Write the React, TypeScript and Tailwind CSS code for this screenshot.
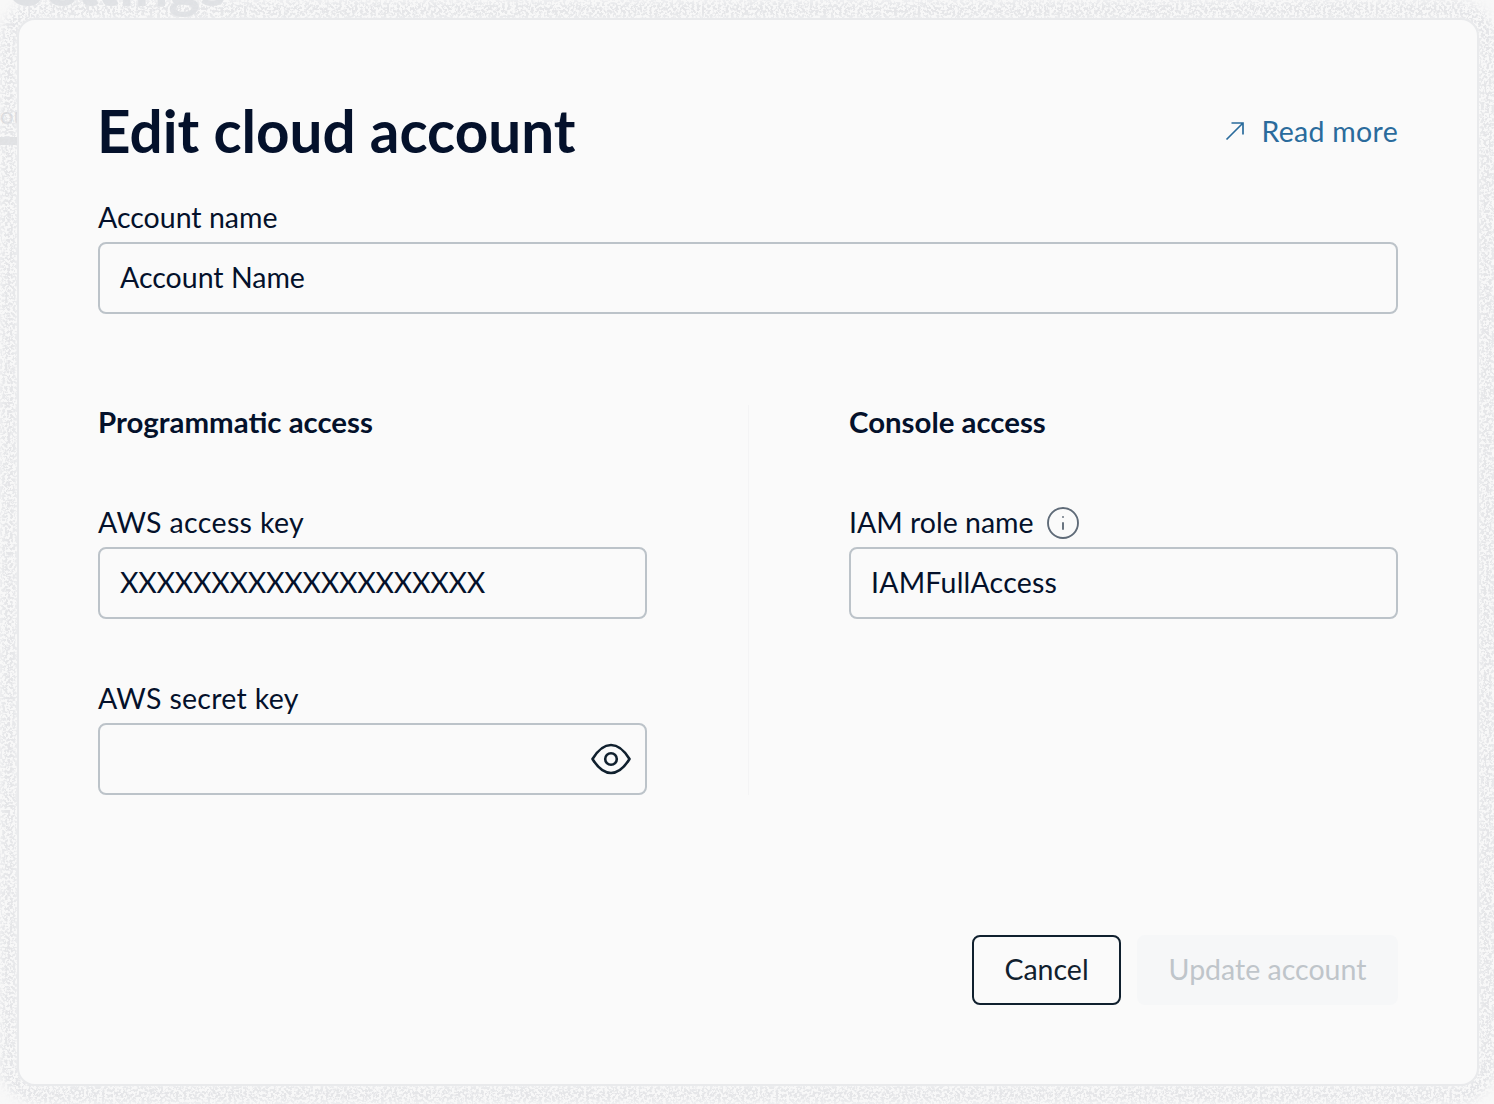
import React from 'react';
import { Info } from 'lucide-react';

function Label({ className, children }: { className?: string; children: React.ReactNode }) {
  return <div className={`flex h-[36px] items-center gap-[11px] pb-[2px] text-[28.5px] text-[#04112b] ${className ?? ''}`}>{children}</div>;
}

function Heading({ children }: { children: React.ReactNode }) {
  return <div className="flex h-[36px] items-center pb-[2px] text-[29.4px] font-bold text-[#04112b]">{children}</div>;
}

function Field({ value, className, children }: { value?: string; className?: string; children?: React.ReactNode }) {
  return (
    <div className="mt-[6px] flex h-[72px] items-center justify-between rounded-lg border-2 border-[#bcc3c9] px-[20px] text-[28.5px] text-[#04112b]">
      <span className={`pb-[2px] ${className ?? ''}`}>{value}</span>
      {children}
    </div>
  );
}

// dithered halo the dialog casts over the page behind it
function Halo() {
  return (
    <svg className="absolute left-0 top-0" width="1494" height="1104">
      <defs>
        <filter id="dither" x="-5%" y="-5%" width="110%" height="110%">
          <feGaussianBlur in="SourceGraphic" stdDeviation="6" result="soft" />
          <feTurbulence type="fractalNoise" baseFrequency="0.38" numOctaves="2" seed="4" result="noise" />
          <feColorMatrix in="noise" type="matrix" values="0 0 0 0 0  0 0 0 0 0  0 0 0 0 0  0 0 0 7 -3" result="mask" />
          <feComposite in="soft" in2="mask" operator="in" />
        </filter>
      </defs>
      <rect x="9" y="10" width="1478" height="1084" rx="30" fill="none" stroke="#e2e3e6" strokeWidth="18" filter="url(#dither)" />
    </svg>
  );
}

export default function App() {
  return (
    <div className="relative h-[1104px] w-[1494px] overflow-hidden bg-[#f8f8f8] pl-[17px] pt-[18px] font-['Lato',sans-serif]">
      {/* page behind the dialog */}
      <div className="absolute left-[12px] top-[-47px] text-[60px] font-bold leading-[60px] text-[#dfe1e4]">Settings</div>
      <div className="absolute left-0 top-[103px] text-[24px] leading-[24px] text-[#d8dadd]">ou</div>
      <div className="absolute left-0 top-[137px] h-[8px] w-[17px] bg-[#e0e1e3]" />
      <Halo />

      <div className="relative h-[1068px] w-[1462px] rounded-[18px] border-2 border-[#e9eaec] bg-[#fafafa] px-[79px] pt-[76px]">
        <div className="flex h-[72px] items-center justify-between">
          <h1 className="ml-[-1px] pb-[3px] text-[58.4px] font-bold text-[#04112b]">Edit cloud account</h1>
          <a className="flex items-center gap-[16px] pb-[2px] text-[28.5px] tracking-[0.3px] text-[#2a6b9c]">
            <svg width="20" height="20" viewBox="0 0 20 20" fill="none" stroke="currentColor" strokeWidth="1.7" className="ml-[2px]">
              <path d="M1.5 18.5L18 2M6.5 2H18V13.5" />
            </svg>
            Read more
          </a>
        </div>

        <div className="mt-[32px]">
          <Label>Account name</Label>
          <Field value="Account Name" />
        </div>

        <div className="mt-[91px] flex">
          <div className="w-[549px]">
            <Heading>Programmatic access</Heading>
            <div className="mt-[64px]">
              <Label className="tracking-[0.35px]">AWS access key</Label>
              <Field value="XXXXXXXXXXXXXXXXXXXX" className="tracking-[-0.25px]" />
            </div>
            <div className="mt-[62px]">
              <Label className="tracking-[0.3px]">AWS secret key</Label>
              <Field>
                <svg width="40" height="32" viewBox="0 0 40 32" fill="none" stroke="#10202e" strokeWidth="2.6" className="mr-[-6px]">
                  <path d="M1.5 16C7 7 13 2 20 2S33 7 38.5 16C33 25 27 30 20 30S7 25 1.5 16Z" strokeLinejoin="round" />
                  <circle cx="20" cy="16" r="5.8" />
                </svg>
              </Field>
            </div>
          </div>
          <div className="ml-[101px] mr-[100px] w-px bg-[#f4f4f5]" />
          <div className="w-[549px]">
            <Heading>Console access</Heading>
            <div className="mt-[64px]">
              <Label>
                IAM role name
                <Info size={36} strokeWidth={1.25} className="mt-[2px] text-[#5f6b78]" />
              </Label>
              <Field value="IAMFullAccess" className="tracking-[0.2px]" />
            </div>
          </div>
        </div>

        <div className="mt-[140px] flex justify-end gap-[16px]">
          <button className="h-[70px] w-[149px] rounded-lg border-2 border-[#10202e] pb-[2px] text-[28.5px] text-[#10202e]">Cancel</button>
          <button disabled className="h-[70px] w-[261px] rounded-lg bg-[#f6f7f8] pb-[2px] text-[28.5px] text-[#bfc5ca]">Update account</button>
        </div>
      </div>
    </div>
  );
}
